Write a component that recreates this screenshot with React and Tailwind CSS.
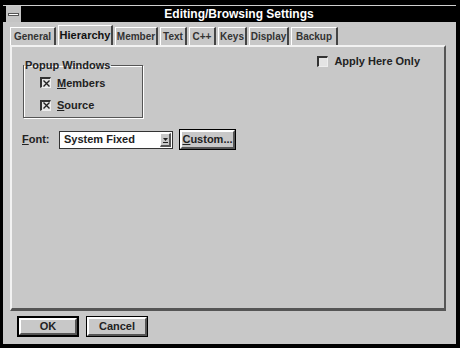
import React from "react";

const tabs = [
  { label: "General", w: 46 },
  { label: "Hierarchy", w: 55, active: true },
  { label: "Member", w: 43 },
  { label: "Text", w: 27 },
  { label: "C++", w: 27 },
  { label: "Keys", w: 29 },
  { label: "Display", w: 40 },
  { label: "Backup", w: 47 },
];

function CheckBox({ checked }) {
  return (
    <span className="flex h-[11px] w-[11px] items-center justify-center border-l-2 border-t-2 border-r border-b border-l-[#333] border-t-[#333] border-r-[#eee] border-b-[#eee] bg-[#e4e4e4]">
      {checked && (
        <svg width="7" height="7" viewBox="0 0 7 7">
          <path d="M0.5 0.5 L6.5 6.5 M6.5 0.5 L0.5 6.5" stroke="#222" strokeWidth="1.4" />
        </svg>
      )}
    </span>
  );
}

function Button({ children, primary, w }) {
  return (
    <div
      className={`flex h-[21px] items-center justify-center border-black bg-[#c8c8c8] ${primary ? "border-2" : "border"}`}
      style={{ width: w }}
    >
      <div className="flex h-full w-full items-center justify-center border-l-2 border-t-2 border-r-2 border-b-2 border-l-white border-t-white border-r-[#555] border-b-[#555]">
        {children}
      </div>
    </div>
  );
}

export default function App() {
  return (
    <div
      className="flex h-[348px] w-[460px] flex-col bg-black pb-[4px] pl-[3px] pr-[4px] pt-[5px] text-[11px] font-bold text-[#222]"
      style={{ fontFamily: '"Liberation Sans", Arial, sans-serif' }}
    >
      {/* Title bar */}
      <div className="flex h-[17px] border-t border-[#cfcfcf]">
        <div className="ml-[3px] flex w-[16px] items-center justify-center border-r border-black bg-[#c4c4c4]">
          <div className="h-[3px] w-[11px] border border-[#555] bg-white" />
        </div>
        <div className="flex flex-1 items-center justify-center bg-black text-[12px] text-white">
          Editing/Browsing Settings
        </div>
      </div>

      {/* Dialog body */}
      <div className="flex flex-1 flex-col bg-[#c8c8c8] px-[7px] pt-[4px]">
        {/* Tabs */}
        <div className="flex h-[19px] items-end">
          {tabs.map((t) => (
            <div
              key={t.label}
              className={`mr-[2px] flex items-center justify-center border-l border-t border-r-2 border-l-white border-t-white border-r-[#444] ${
                t.active ? "h-[20px] font-bold text-[#111]" : "h-[18px] font-normal text-[#333]"
              }`}
              style={{ width: t.w }}
            >
              <span className={t.active ? "text-[11px]" : "text-[10px] font-semibold"}>{t.label}</span>
            </div>
          ))}
        </div>

        {/* Panel */}
        <div className="flex h-[266px] w-[436px] flex-col border-l-2 border-t-2 border-r-2 border-b-[3px] border-l-[#f2f2f2] border-t-[#f2f2f2] border-r-[#555] border-b-[#555] px-[10px] pt-[10px]">
          <div className="flex items-start justify-between">
            <fieldset className="ml-[1px] h-[61px] w-[120px] border border-[#555] pl-[16px] shadow-[inset_1px_1px_0_#fff,1px_1px_0_#fff]">
              <legend className="-ml-[16px] px-[1px] text-[11px]">Popup Windows</legend>
              <div className="mt-[1px] flex items-center gap-[6px]">
                <CheckBox checked />
                <span>
                  <span className="underline">M</span>embers
                </span>
              </div>
              <div className="mt-[6px] flex items-center gap-[6px]">
                <CheckBox checked />
                <span>
                  <span className="underline">S</span>ource
                </span>
              </div>
            </fieldset>
            <div className="mr-[14px] mt-[-4px] flex items-center gap-[6px]">
              <CheckBox />
              <span>Apply Here Only</span>
            </div>
          </div>

          {/* Font row */}
          <div className="mt-[11px] flex items-center">
            <span className="w-[37px]">
              <span className="underline">F</span>ont:
            </span>
            <div className="flex h-[18px] w-[114px] items-center border border-[#333] bg-white">
              <span className="flex-1 pl-[4px]">System Fixed</span>
              <div className="mr-[1px] flex h-[14px] w-[11px] items-center justify-center border-l-[1px] border-t-[1px] border-r-[2px] border-b-[2px] border-l-white border-t-white border-r-[#555] border-b-[#555] bg-[#c8c8c8]">
                <svg width="5" height="7" viewBox="0 0 5 7">
                  <path d="M0 2 L5 2 L2.5 5 Z" fill="#222" />
                  <path d="M0 6.5 L5 6.5" stroke="#222" strokeWidth="1" />
                </svg>
              </div>
            </div>
            <div className="ml-[6px]">
              <Button w={57}>
                <span>
                  <span className="underline">C</span>ustom...
                </span>
              </Button>
            </div>
          </div>
        </div>

        {/* Buttons */}
        <div className="mt-[5px] flex gap-[7px] pl-[7px]">
          <Button primary w={62}>
            OK
          </Button>
          <Button w={62}>Cancel</Button>
        </div>
      </div>
    </div>
  );
}
